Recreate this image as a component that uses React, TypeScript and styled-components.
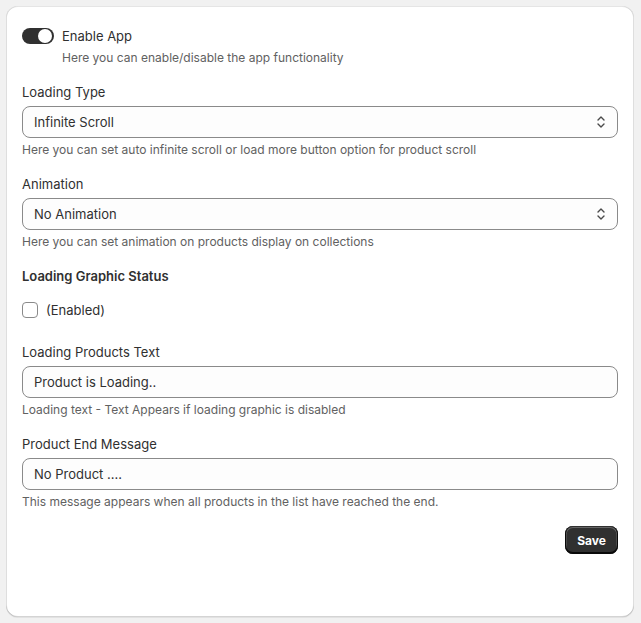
import React, { useState } from 'react';
import styled, { createGlobalStyle } from 'styled-components';

const GlobalStyle = createGlobalStyle`
  * { box-sizing: border-box; }
  body {
    margin: 0;
    background: #f1f1f1;
    font-family: Inter, "Noto Sans", sans-serif;
    color: #303030;
    font-size: 13px;
    line-height: 20px;
  }
`;

const Page = styled.div`
  padding: 6px 7px 6px 6px;
`;

const Card = styled.div`
  background: #ffffff;
  border-radius: 12px;
  box-shadow: 0 1px 0 0 rgba(26, 26, 26, 0.07), 0 1px 0 0 rgba(204, 204, 204, 0.5) inset,
    0 -1px 0 0 rgba(0, 0, 0, 0.17) inset, -1px 0 0 0 rgba(0, 0, 0, 0.13) inset,
    1px 0 0 0 rgba(0, 0, 0, 0.13) inset;
  padding: 20px 16px 63px 16px;
  display: flex;
  flex-direction: column;
  gap: 16px;
`;

const ToggleRow = styled.label`
  display: flex;
  align-items: center;
  gap: 8px;
  cursor: pointer;
`;

const Track = styled.span<{ $on: boolean }>`
  width: 32px;
  height: 16px;
  border-radius: 8px;
  background: ${(p) => (p.$on ? '#303030' : '#b5b5b5')};
  position: relative;
  flex-shrink: 0;
`;

const Knob = styled.span<{ $on: boolean }>`
  position: absolute;
  top: 1px;
  left: ${(p) => (p.$on ? '16px' : '2px')};
  width: 14px;
  height: 14px;
  border-radius: 50%;
  background: #ffffff;
`;

const ToggleBlock = styled.div`
  display: flex;
  flex-direction: column;
  gap: 4px;
`;

const Indented = styled.div`
  padding-left: 40px;
`;

const Field = styled.div`
  display: flex;
  flex-direction: column;
  gap: 4px;
`;

const Label = styled.div<{ $bold?: boolean }>`
  font-weight: ${(p) => (p.$bold ? 600 : 400)};
`;

const Help = styled.div`
  color: #616161;
  font-size: 12px;
  line-height: 16px;
`;

const SelectBox = styled.div`
  position: relative;
  height: 32px;
  border: 1px solid #8a8a8a;
  border-radius: 8px;
  background: #fdfdfd;
  display: flex;
  align-items: center;
  padding: 0 11px;
`;

const Chevrons = styled.svg`
  position: absolute;
  right: 10px;
  top: 50%;
  transform: translateY(-50%);
`;

const TextInput = styled.input`
  height: 32px;
  width: 100%;
  border: 1px solid #8a8a8a;
  border-radius: 8px;
  background: #fdfdfd;
  padding: 0 11px;
  font: inherit;
  color: #303030;
  outline: none;
`;

const CheckRow = styled.label`
  display: flex;
  align-items: center;
  gap: 8px;
  margin: 10px 0 6px 0;
`;

const CheckBox = styled.span`
  width: 16px;
  height: 16px;
  border: 1px solid #8a8a8a;
  border-radius: 4px;
  background: #ffffff;
  flex-shrink: 0;
`;

const Footer = styled.div`
  display: flex;
  justify-content: flex-end;
`;

const SaveButton = styled.button`
  height: 28px;
  padding: 0 12px;
  border: none;
  border-radius: 8px;
  background: #303030;
  color: #ffffff;
  font-family: Inter, "Noto Sans", sans-serif;
  font-size: 12px;
  font-weight: 700;
  box-shadow: 0 -1px 0 1px rgba(0, 0, 0, 0.8) inset, 0 0 0 1px #303030 inset,
    0 0.5px 0 1.5px rgba(255, 255, 255, 0.25) inset;
  cursor: pointer;
`;

const SelectField: React.FC<{ label: string; value: string; help: string }> = ({ label, value, help }) => (
  <Field>
    <Label>{label}</Label>
    <SelectBox>
      {value}
      <Chevrons width="12" height="16" viewBox="0 0 12 16" fill="none" stroke="#4a4a4a" strokeWidth="1.4" strokeLinecap="round" strokeLinejoin="round">
        <path d="M3 6l3-3 3 3" />
        <path d="M3 10l3 3 3-3" />
      </Chevrons>
    </SelectBox>
    <Help>{help}</Help>
  </Field>
);

const InputField: React.FC<{ label: string; value: string; help: string }> = ({ label, value, help }) => (
  <Field>
    <Label>{label}</Label>
    <TextInput defaultValue={value} />
    <Help>{help}</Help>
  </Field>
);

export default function App() {
  const [enabled, setEnabled] = useState(true);

  return (
    <Page>
      <GlobalStyle />
      <Card>
        <ToggleBlock>
          <ToggleRow onClick={() => setEnabled(!enabled)}>
            <Track $on={enabled}>
              <Knob $on={enabled} />
            </Track>
            <span>Enable App</span>
          </ToggleRow>
          <Indented>
            <Help>Here you can enable/disable the app functionality</Help>
          </Indented>
        </ToggleBlock>

        <SelectField
          label="Loading Type"
          value="Infinite Scroll"
          help="Here you can set auto infinite scroll or load more button option for product scroll"
        />
        <SelectField
          label="Animation"
          value="No Animation"
          help="Here you can set animation on products display on collections"
        />

        <Field>
          <Label $bold>Loading Graphic Status</Label>
          <CheckRow>
            <CheckBox />
            <span>(Enabled)</span>
          </CheckRow>
        </Field>

        <InputField
          label="Loading Products Text"
          value="Product is Loading.."
          help="Loading text - Text Appears if loading graphic is disabled"
        />
        <InputField
          label="Product End Message"
          value="No Product ...."
          help="This message appears when all products in the list have reached the end."
        />

        <Footer>
          <SaveButton>Save</SaveButton>
        </Footer>
      </Card>
    </Page>
  );
}
